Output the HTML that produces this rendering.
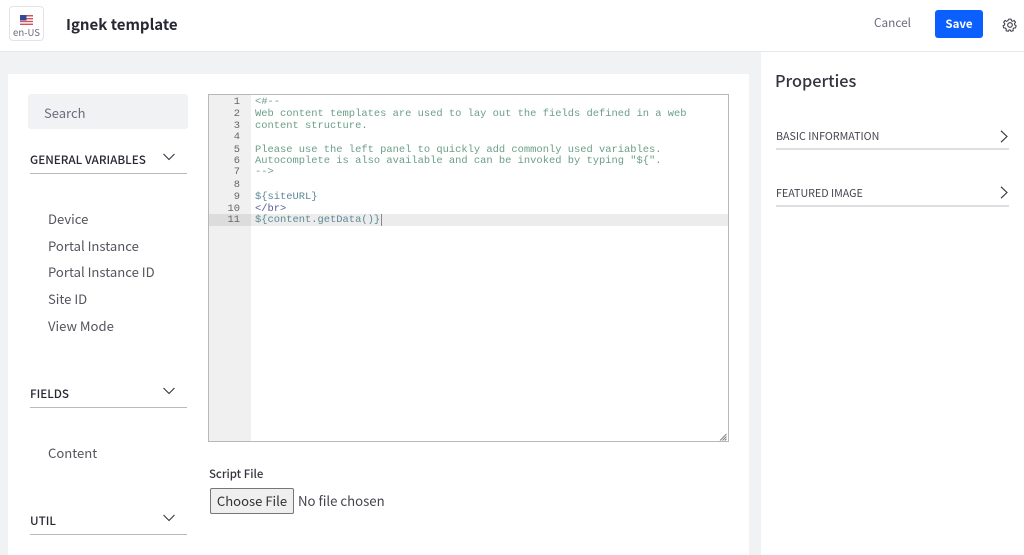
<!DOCTYPE html>
<html lang="en"><head><meta charset="utf-8"><title>Ignek template</title>
<style>
html,body{margin:0;padding:0;width:1024px;height:555px;overflow:hidden;background:#f1f2f4}
body{position:relative;font-family:"Noto Sans CJK JP","Liberation Sans",sans-serif;color:#272833}
.a{position:absolute;white-space:nowrap}
.t{transform:translateY(-50%);line-height:20px}
.item{left:48px;font-size:13.1px;color:#55555e}
.sec{left:30px;font-size:11.7px;font-weight:500;color:#272833}
.rule{left:30px;width:157px;height:1px;background:#b9b9be}
.prop{left:776px;font-size:10.7px;color:#44454f}
.prule{left:776px;width:233px;height:2px;background:#dfdfe3}
svg{position:absolute;overflow:visible}
#gutter div,#code div{position:absolute;height:12px;line-height:12px;white-space:pre;font:10.43px/12px "Liberation Mono",monospace}
#gutter div{right:11px;color:#666}
.c{color:#6b9f88}.g{color:#5c8a96}.n{color:#5a5a9a}
</style></head><body>
<div class="a" style="left:0;top:0;width:1024px;height:51px;background:#fff;border-bottom:1px solid #e7e7ed"></div>
<div class="a" style="left:9px;top:6px;width:33px;height:33px;border:1px solid #e2e2e8;border-radius:4px;background:#fff"></div>
<svg style="left:20px;top:15px" width="13" height="10" viewBox="0 0 13 10">
<rect width="13" height="10" fill="#fff"/>
<rect y="0" width="13" height="1.5" fill="#d5505a"/><rect y="3" width="13" height="1.4" fill="#d5505a"/><rect y="5.8" width="13" height="1.4" fill="#d5505a"/><rect y="8.6" width="13" height="1.4" fill="#d5505a"/>
<rect width="6.5" height="5.4" fill="#2f4a99"/></svg>
<div class="a t" style="left:13px;top:32px;font-size:9.6px;color:#6b6c7e">en-US</div>
<div class="a t" style="left:66px;top:25px;font-size:15px;font-weight:700;color:#272833">Ignek template</div>
<div class="a t" style="left:874px;top:23px;font-size:11.8px;color:#6b6c7e">Cancel</div>
<div class="a" style="left:935px;top:10px;width:48px;height:28px;background:#0b5fff;border-radius:3px;color:#fff;font-size:11.5px;font-weight:700;text-align:center;line-height:28px">Save</div>
<svg style="left:1003px;top:18px" width="14" height="14" viewBox="0 0 14 14" fill="none" stroke="#3a3b45" stroke-width="1.1">
<path d="M5.8 1h2.4l.4 1.7 1.3.6 1.5-.9 1.5 1.9-1.1 1.3.2 1.4 1.5.9-.6 2.3-1.8.1-.9 1.1.2 1.8-2.3.6-1-1.5H6.2l-1 1.5-2.3-.6.2-1.8-.9-1.1-1.8-.1L-.2 8l1.5-.9.2-1.4L.4 4.3l1.5-1.9 1.5.9 1.3-.6z" transform="translate(.3 .2) scale(.95)"/>
<circle cx="7" cy="7" r="2.3"/></svg>

<div class="a" style="left:8px;top:74px;width:741px;height:481px;background:#fff"></div>
<div class="a" style="left:761px;top:52px;width:263px;height:503px;background:#fff"></div>

<div class="a" style="left:28px;top:94px;width:160px;height:35px;background:#f1f2f4;border-radius:3px"></div>
<div class="a t" style="left:44px;top:113px;font-size:13px;color:#6b6c7e">Search</div>

<div class="a t sec" style="top:160px">GENERAL VARIABLES</div>
<svg style="left:163px;top:153px" width="12" height="8" fill="none" stroke="#33343e" stroke-width="1.1"><path d="M.5 1 6 6.5 11.5 1"/></svg>
<div class="a rule" style="top:173px"></div>
<div class="a t item" style="top:219px">Device</div>
<div class="a t item" style="top:246px">Portal Instance</div>
<div class="a t item" style="top:272px">Portal Instance ID</div>
<div class="a t item" style="top:299px">Site ID</div>
<div class="a t item" style="top:326px">View Mode</div>

<div class="a t sec" style="top:394px">FIELDS</div>
<svg style="left:163px;top:387px" width="12" height="8" fill="none" stroke="#33343e" stroke-width="1.1"><path d="M.5 1 6 6.5 11.5 1"/></svg>
<div class="a rule" style="top:407px"></div>
<div class="a t item" style="top:453px">Content</div>

<div class="a t sec" style="top:521px">UTIL</div>
<svg style="left:163px;top:514px" width="12" height="8" fill="none" stroke="#33343e" stroke-width="1.1"><path d="M.5 1 6 6.5 11.5 1"/></svg>
<div class="a rule" style="top:534px"></div>

<div class="a" style="left:208px;top:94px;width:519px;height:346px;border:1px solid #b8b8b8;background:#fff;overflow:hidden">
  <div class="a" style="left:0;top:0;width:42px;height:346px;background:#f0f0f0"></div>
  <div class="a" style="left:0;top:119px;width:42px;height:12px;background:#dcdcdc"></div>
  <div class="a" style="left:42px;top:119px;width:477px;height:12px;background:#ececec"></div>
  <div id="gutter" class="a" style="left:0;top:0;width:42px;height:346px">
    <div style="top:1px">1</div><div style="top:13px">2</div><div style="top:25px">3</div><div style="top:36px">4</div><div style="top:49px">5</div><div style="top:60px">6</div><div style="top:71px">7</div><div style="top:84px">8</div><div style="top:96px">9</div><div style="top:108px">10</div><div style="top:119px">11</div>
  </div>
  <div id="code" class="a" style="left:46px;top:0;width:470px;height:346px">
    <div class="c" style="top:1px">&lt;#--</div>
    <div class="c" style="top:13px">Web content templates are used to lay out the fields defined in a web</div>
    <div class="c" style="top:25px">content structure.</div>
    <div class="c" style="top:49px">Please use the left panel to quickly add commonly used variables.</div>
    <div class="c" style="top:60px">Autocomplete is also available and can be invoked by typing "${".</div>
    <div class="c" style="top:71px">--&gt;</div>
    <div class="g" style="top:96px">${siteURL}</div>
    <div class="n" style="top:108px">&lt;/br&gt;</div>
    <div class="g" style="top:119px">${content.getData()}</div>
  </div>
  <div class="a" style="left:172px;top:119px;width:1px;height:12px;background:#888"></div>
</div>
<svg style="left:719px;top:433px" width="8" height="8" fill="none" stroke="#808080" stroke-width="1"><path d="M1 7.5 7.5 1M3.5 7.5 7.5 3.5M5.8 7.5 7.5 5.8"/></svg>

<div class="a t" style="left:209px;top:474px;font-size:11.4px;font-weight:500;color:#33343e">Script File</div>
<div class="a" style="left:210px;top:488px;width:82px;height:24px;background:#efefef;border:1px solid #767676;border-radius:2px;font-size:13.1px;line-height:24px;text-align:center;color:#333">Choose File</div>
<div class="a t" style="left:298px;top:501px;font-size:13.2px;color:#44454f">No file chosen</div>

<div class="a t" style="left:775px;top:80px;font-size:16.3px;font-weight:500;color:#33343e">Properties</div>
<div class="a t prop" style="top:137px">BASIC INFORMATION</div>
<svg style="left:1000px;top:130px" width="8" height="13" fill="none" stroke="#33343e" stroke-width="1.1"><path d="M1 .8 7 6.5 1 12.2"/></svg>
<div class="a prule" style="top:148px"></div>
<div class="a t prop" style="top:194px">FEATURED IMAGE</div>
<svg style="left:1000px;top:186px" width="8" height="13" fill="none" stroke="#33343e" stroke-width="1.1"><path d="M1 .8 7 6.5 1 12.2"/></svg>
<div class="a prule" style="top:205px"></div>
</body></html>
